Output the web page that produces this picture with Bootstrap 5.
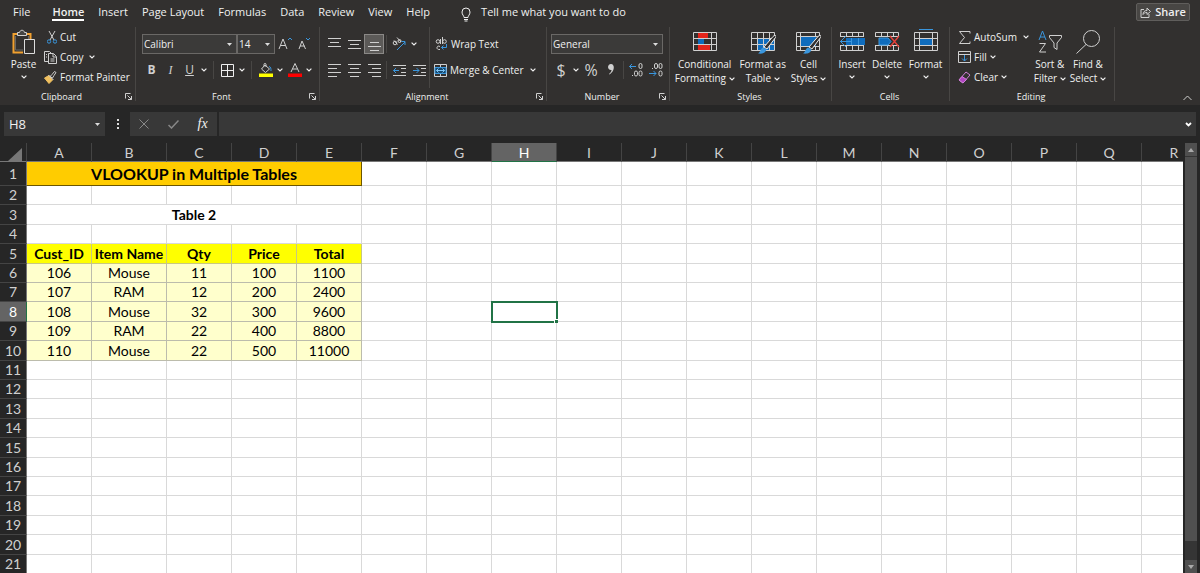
<!DOCTYPE html>
<html lang="en">
<head>
<meta charset="utf-8">
<meta name="viewport" content="width=device-width, initial-scale=1">
<title>Workbook</title>
<link href="https://cdn.jsdelivr.net/npm/bootstrap@5.3.0/dist/css/bootstrap.min.css" rel="stylesheet">
<style>
:root{--ribbon:#32302f;--dark:#262626;--field:#383838;--ink:#f0f0f0;--blue:#3a96dd}
body{background:var(--dark);color:var(--ink);font:11px/14px "Open Sans","Noto Sans",sans-serif}
button,select,input{font:inherit;color:inherit}
button{background:none;border:0;padding:0}
svg{display:block;fill:none;stroke:#d0d0d0;flex:none}
.app{height:100vh;overflow:hidden}
.ribbon{background:var(--ribbon)}
.tabs{height:27px;padding:3px 10px 0 13px}
.tabs .menu{gap:14px}
.tabs a{color:var(--ink);text-decoration:none;height:18px;line-height:17px;white-space:nowrap}
.tabs a.active{font-weight:600;border-bottom:2px solid #fff}
.share{background:#484644;border:1px solid #605e5c;border-radius:2px;width:54px;height:18px;font-weight:600}
.group{border-right:1px solid #484644;height:74px;flex:none;font-size:10px;line-height:14px;white-space:nowrap}
.gbody{height:61px}
.gname{height:16px;padding-right:2px;font-size:9px;line-height:18px}
.gname .ch{height:16px}
.rows{padding-top:7px;gap:6px}
.line{height:20px;gap:3px}
.ib{height:20px;width:19px;display:flex;align-items:center;justify-content:center;font-size:12px;color:#d0d0d0;flex:none}
.wide .ib{width:20px}
.ib.on{background:#5c5a58;border:1px solid #8a8886}
.ch{width:10px;height:20px;display:flex;align-items:center;justify-content:center;flex:none}
.sp{width:1px;height:18px;margin:0 2px;background:#484644;flex:none}
.pick{appearance:none;height:20px;background:#3b3a39 url("data:image/svg+xml,%3Csvg xmlns='http://www.w3.org/2000/svg' width='5' height='3'%3E%3Cpath d='M0 0h5L2.5 3z' fill='%23ddd'/%3E%3C/svg%3E") no-repeat right 4px center;border:1px solid #6a6866;border-radius:0;padding:0 1px;line-height:16px}
.big{display:flex;flex-direction:column;align-items:center;padding-top:2px;flex:none}
.big svg.pic{margin-bottom:2px}
.big svg.dn{margin-top:4px}
.big .dn.d-inline{margin:0}
.fbar{height:38px;padding:7px 4px}
.fbar>*{background:var(--field);height:24px}
.namebox{width:101px;font-size:13px;padding:0 5px}
.dots{width:25px}
.fx{width:87px;margin-right:2px}
.fbox{border:0;outline:0;width:100%;background:transparent;min-width:0}
.sheet{font-family:Lato,"Open Sans",sans-serif;font-size:14px;line-height:16px;color:#000}
.grid{table-layout:fixed;width:1207px;border-collapse:separate;border-spacing:0;text-align:center;background:#fff;white-space:nowrap}
.grid th,.grid td{padding:0;border-right:1px solid #d9d9d9;border-bottom:1px solid #d9d9d9}
.grid tr{height:19px}
.grid tr.tall{height:20px}
.grid thead th,.grid tbody th{background:var(--dark);color:#d0d0d0;font-weight:400;border-color:#444}
.grid thead th{border-bottom-color:#777;vertical-align:bottom}
.grid tbody th{border-right-color:#777}
.grid thead th.cur{background:#646464;border-bottom-color:#217346;color:#fff}
.grid tbody th.cur{background:#646464;border-right-color:#217346;color:#fff}
.grid tr.first{height:24px}
.grid td.title{background:#fc0;font-size:16px;font-weight:700;border-color:#6b5600}
.grid td.fields{background:#ff0;font-weight:700;border-color:#c8c880}
.grid td.rec{background:#ffc;border-color:#bcbcac}
.grid td.sel{outline:2px solid #217346;outline-offset:-1px;position:relative}
.grid td.sel::after{content:"";position:absolute;right:-2px;bottom:-2px;width:4px;height:4px;background:#217346;border:1px solid #fff;border-width:1px 0 0 1px}
.vbar{width:17px;padding:0 3px 0 2px;flex:none}
.vbar button{height:13px;background:#505050;display:flex;align-items:center;justify-content:center}
.thumb{background:#505050;margin-top:1px}
.track{background:#353535}
</style>
</head>
<body>
<svg width="0" height="0" class="position-absolute" aria-hidden="true">
<symbol id="dn" viewBox="0 0 6 4"><path d="M.6.6 3 3 5.4.6" stroke="#f0f0f0" stroke-width="1.2"/></symbol>
<symbol id="launch" viewBox="0 0 7 7"><path d="M.5 5.5v-5h5M2.5 2.5l4 4M6.5 3v3.500H3"/></symbol>
</svg>
<div class="app d-flex flex-column">
<header class="ribbon">
  <nav class="tabs d-flex justify-content-between">
    <div class="menu d-flex">
      <a href="#" class="me-2">File</a><a href="#" class="active">Home</a><a href="#">Insert</a><a href="#">Page Layout</a><a href="#">Formulas</a><a href="#">Data</a><a href="#">Review</a><a href="#">View</a><a href="#">Help</a>
      <a href="#" class="d-flex ms-3"><svg class="mt-1 me-2" width="13" height="15" viewBox="1 0 13 15"><path d="M5 10.500C5 8.500 3 8 3 5a4 4 0 0 1 8 0c0 3-2 3.500-2 5.500zM5 12.500h4M5.500 14h3" stroke="#eee"/></svg>Tell me what you want to do</a>
    </div>
    <button class="share d-flex align-items-center justify-content-center gap-1"><svg width="11" height="11" viewBox="0 0 11 11"><path d="M4 2.500H1v8h8V7M3 7.500C3 5 4.500 3.500 7 3.500V1l3.500 3.500L7 7.500V5.500C5 5.500 4 6 3 7.500z"/></svg>Share</button>
  </nav>
  <div class="d-flex position-relative pb-1">
    <section class="group" style="width:136px">
      <div class="gbody d-flex">
        <button class="big" style="width:47px"><svg class="pic" width="24" height="26" viewBox="0 0 24 26"><path d="M6 5H1.500v18.500H11M15 5h3.500v5" stroke="#f0a030" stroke-width="2"/><path d="M3.500 7v14H11M16.500 7v3" stroke="#666"/><path d="M5.500 6.500v-3h2C8 .5 12 .5 12.500 3.500h2v3z" fill="#444"/><path d="M12.500 10.500h10v14h-10z" fill="#32302f" stroke="#ddd"/></svg>Paste<svg class="dn" width="6" height="4"><use href="#dn"/></svg></button>
        <div>
          <button class="line d-flex align-items-center"><svg width="10" height="13" viewBox="0 0 10 13"><path d="M2 0 7 9M8 0 3 9"/><circle cx="2" cy="10.500" r="1.700" stroke="#3a96dd"/><circle cx="8" cy="10.500" r="1.700" stroke="#3a96dd"/></svg>Cut</button>
          <div class="d-flex"><button class="line d-flex align-items-center"><svg style="margin-left:-3px" width="13" height="13" viewBox="0 0 13 13"><path d="M4 10.500H.5V.5h5L7 2M4.500 2.500h5l3 3v7h-8zM9 3v3h3M6.500 8h4M6.500 10h4M2 3.500h1M2 6h1"/></svg>Copy</button><button class="ch ms-1" aria-label="Copy options"><svg width="6" height="4"><use href="#dn"/></svg></button></div>
          <button class="line d-flex align-items-center"><svg style="margin-left:-3px" width="13" height="13" viewBox="0 0 13 13"><path d="M.5 7 5 4.500 8.500 9 5 12.500z" fill="#f0c060" stroke="#f0c060"/><path d="m4.500 4 5 5M6 5.500l2-2 2.500-3 1.500 1L10 4.500 8.500 7z" fill="#32302f"/></svg>Format Painter</button>
        </div>
      </div>
      <div class="gname d-flex"><span class="flex-grow-1 text-center">Clipboard</span><button class="ch" aria-label="Clipboard dialog"><svg width="7" height="7"><use href="#launch"/></svg></button></div>
    </section>
    <section class="group" style="width:184px">
      <div class="gbody rows d-flex flex-column ps-1">
        <div class="d-flex ps-1" style="margin-left:-2px"><select class="pick" style="width:95px" aria-label="Font"><option>Calibri</option></select><select class="pick" style="width:38px" aria-label="Size"><option>14</option></select>
          <button class="ib" aria-label="Larger"><svg width="14" height="14" viewBox="0 0 14 14"><path d="m1 12 4-10 4 10M2.500 8.500h5" /><path d="m10 3 2-2 2 2" stroke="#3a96dd"/></svg></button><button class="ib" aria-label="Smaller"><svg width="14" height="14" viewBox="0 0 14 14"><path d="m2 12 3-8 3.500 8M3 9h4.500"/><path d="m9 1 2 2 2-2" stroke="#3a96dd"/></svg></button></div>
        <div class="d-flex align-items-center ps-1" style="margin-left:-2px">
          <button class="ib fw-bold">B</button><button class="ib fst-italic" style="font-family:'Liberation Serif',serif">I</button><button class="ib text-decoration-underline">U</button><button class="ch" aria-label="Underline options"><svg width="6" height="4"><use href="#dn"/></svg></button><i class="sp mx-1"></i>
          <button class="ib" aria-label="Borders"><svg width="13" height="13" viewBox="0 0 13 13"><path d="M.5.5h12v12H.5zM6.500 0v13M0 6.500h13" stroke="#eee"/></svg></button><button class="ch" aria-label="Border options"><svg width="6" height="4"><use href="#dn"/></svg></button><i class="sp mx-1"></i>
          <button class="ib" aria-label="Fill colour"><svg width="14" height="14" viewBox="0 0 14 14"><path d="m6 2 4.500 4L6.500 9.500 2.500 6zM5 3.500V1.500c0-1.500 2-1.500 2 0V4"/><path d="M10 3.500c2 .5 2 2 2 4.500" stroke="#3a96dd"/><path d="M0 10.500h14v3.500H0z" fill="#ff0" stroke="none"/></svg></button><button class="ch" aria-label="Fill options"><svg width="6" height="4"><use href="#dn"/></svg></button>
          <button class="ib" aria-label="Font colour"><svg width="14" height="14" viewBox="0 0 14 14"><path d="m3 9 4-8.500L11 9M4.500 6h5"/><path d="M0 10.500h14v3.500H0z" fill="red" stroke="none"/></svg></button><button class="ch" aria-label="Colour options"><svg width="6" height="4"><use href="#dn"/></svg></button>
        </div>
      </div>
      <div class="gname d-flex"><span class="flex-grow-1 text-center">Font</span><button class="ch" aria-label="Font dialog"><svg width="7" height="7"><use href="#launch"/></svg></button></div>
    </section>
    <section class="group wide" style="width:227px">
      <div class="d-flex">
      <div class="gbody rows d-flex flex-column ps-1 border-end" style="width:110px;border-color:#484644!important">
        <div class="d-flex align-items-center">
          <button class="ib" aria-label="Top align"><svg width="13" height="13" viewBox="0 0 13 13"><path d="M0 .5h13M2 4.500h9M0 8.500h13"/></svg></button><button class="ib" aria-label="Middle align"><svg width="13" height="13" viewBox="0 0 13 13"><path d="M0 2.500h13M2 6.500h9M0 10.500h13"/></svg></button><button class="ib on" aria-label="Bottom align"><svg width="13" height="13" viewBox="0 0 13 13"><path d="M2 4.500h9M0 8.500h13M2 12.500h9"/></svg></button><i class="sp"></i>
          <button class="ib" aria-label="Orientation"><svg width="14" height="14" viewBox="0 0 14 14"><circle cx="3" cy="6" r="1.800"/><path d="m2 3.500 3.500 4M5 .5l4 4.500"/><circle cx="7.500" cy="4" r="1.500"/><path d="M5 13 13 5M9.500 4.500H13V8" stroke="#3a96dd"/></svg></button><button class="ch" aria-label="Orientation options"><svg width="6" height="4"><use href="#dn"/></svg></button>
        </div>
        <div class="d-flex align-items-center">
          <button class="ib" aria-label="Left"><svg width="13" height="13" viewBox="0 0 13 13"><path d="M0 .5h13M0 4.500h9M0 8.500h13M0 12.500h9"/></svg></button><button class="ib" aria-label="Centre"><svg width="13" height="13" viewBox="0 0 13 13"><path d="M0 .5h13M2 4.500h9M0 8.500h13M2 12.500h9"/></svg></button><button class="ib" aria-label="Right"><svg width="13" height="13" viewBox="0 0 13 13"><path d="M0 .5h13M4 4.500h9M0 8.500h13M4 12.500h9"/></svg></button><i class="sp"></i>
          <button class="ib" aria-label="Decrease indent"><svg width="13" height="13" viewBox="0 0 13 13"><path d="M0 1.500h13M8 4.500h5M8 8.500h5M0 11.500h13"/><path d="M6 6.500H.5M3 4 .5 6.500 3 9" stroke="#3a96dd"/></svg></button><button class="ib" aria-label="Increase indent"><svg width="13" height="13" viewBox="0 0 13 13"><path d="M0 1.500h13M8 4.500h5M8 8.500h5M0 11.500h13"/><path d="M0 6.500h6M3.500 4 6 6.500 3.500 9" stroke="#3a96dd"/></svg></button>
        </div>
      </div>
      <div class="rows d-flex flex-column ps-1">
        <button class="line d-flex align-items-center"><svg width="14" height="14" viewBox="0 0 14 14"><circle cx="4" cy="4.500" r="1.800"/><path d="M6.500 2v5M8.500 0v7M6 9.500c-3-2-5 3.500 0 3"/><circle cx="10.500" cy="4.500" r="1.800"/><path d="M12.500 7v3.500H7.500M9.500 8.500l-2 2 2 2" stroke="#3a96dd"/></svg>Wrap Text</button>
        <div class="d-flex"><button class="line d-flex align-items-center"><svg width="13" height="13" viewBox="0 0 13 13"><path d="M.5.5h12v12H.5zM6.500 0v3M6.500 10v3M0 3.500h13M0 9.500h13"/><path d="M1 3.500h11v6H1z" fill="#17496f" stroke="#3a96dd"/><path d="M2.500 6.500h8M4.500 4.500l-2 2 2 2M8.500 4.500l2 2-2 2" stroke="#7cc4f5"/></svg>Merge &amp; Center</button><button class="ch ms-1" aria-label="Merge options"><svg width="6" height="4"><use href="#dn"/></svg></button></div>
      </div>
      </div>
      <div class="gname d-flex"><span class="flex-grow-1 text-center">Alignment</span><button class="ch" aria-label="Alignment dialog"><svg width="7" height="7"><use href="#launch"/></svg></button></div>
    </section>
    <section class="group wide" style="width:123px">
      <div class="gbody rows d-flex flex-column ps-1">
        <select class="pick" style="width:112px" aria-label="Number format"><option>General</option></select>
        <div class="d-flex align-items-center">
          <button class="ib fs-6">$</button><button class="ch" aria-label="Currency options"><svg width="6" height="4"><use href="#dn"/></svg></button><button class="ib fs-6">%</button><button class="ib" aria-label="Comma style"><svg width="8" height="12" viewBox="0 0 8 12"><path d="M4 0c4 0 4 7-1.500 10.500L2 10c2-2 2.500-3 2.500-4C0 6.500 0 0 4 0z" fill="#d0d0d0" stroke="none"/></svg></button><i class="sp"></i>
          <button class="ib" aria-label="Increase decimal"><svg width="14" height="14" viewBox="0 0 14 14"><path d="M7 3.500H.5M3 1 .5 3.500 3 6" stroke="#3a96dd"/><rect x="10" y=".5" width="3" height="5" rx="1.500"/><rect x="5.500" y="8" width="3" height="5" rx="1.500"/><rect x="10" y="8" width="3" height="5" rx="1.500"/><path d="M3 12.500h1"/></svg></button><button class="ib" aria-label="Decrease decimal"><svg width="14" height="14" viewBox="0 0 14 14"><path d="M0 10.500h7M4.500 8 7 10.500 4.500 13" stroke="#3a96dd"/><rect x="5.500" y=".5" width="3" height="5" rx="1.500"/><rect x="10" y=".5" width="3" height="5" rx="1.500"/><rect x="10" y="8" width="3" height="5" rx="1.500"/><path d="M3 5.500h1"/></svg></button>
        </div>
      </div>
      <div class="gname d-flex"><span class="flex-grow-1 text-center">Number</span><button class="ch" aria-label="Number dialog"><svg width="7" height="7"><use href="#launch"/></svg></button></div>
    </section>
    <section class="group" style="width:162px">
      <div class="gbody d-flex justify-content-evenly">
        <button class="big"><svg class="pic" width="26" height="26" viewBox="0 0 26 26"><path d="M1.500 3.500h23v18h-23zM1 9.500h24M1 15.500h24M6.500 3v19M19.500 3v19"/><path d="M6 4h10v5H6zM6 16h12v5H6z" fill="#e3241b" stroke="none"/><path d="M6 10h6v5H6z" fill="#0f6cbd" stroke="none"/></svg>Conditional<span>Formatting <svg class="dn d-inline" width="6" height="4"><use href="#dn"/></svg></span></button>
        <button class="big"><svg class="pic" width="26" height="26" viewBox="0 0 26 26"><path d="M8 9h17v12H8z" fill="#0f6cbd" stroke="none"/><path d="M1.500 3.500h23v18h-23zM1 9.500h24M1 15.500h24M7.500 3v19M13.500 3v19M19.500 3v19"/><path d="m14 18 9-10.500c2-2 4-1 2.500 1L17 20z" fill="#32302f" stroke="#eee"/><path d="M16.500 20.500c-1 4-5 4.500-8.500 4 3-1.500 2-5.500 5.500-6z" fill="#3a96dd" stroke="none"/></svg>Format as<span>Table <svg class="dn d-inline" width="6" height="4"><use href="#dn"/></svg></span></button>
        <button class="big"><svg class="pic" width="26" height="26" viewBox="0 0 26 26"><path d="M1.500 3.500h23v18h-23zM1 7.500h24M1 17.500h24M5.500 3v19M20.500 3v19"/><path d="M6 8h15v9H6z" fill="#0f6cbd" stroke="none"/><path d="m14 18 9-10.500c2-2 4-1 2.500 1L17 20z" fill="#32302f" stroke="#eee"/><path d="M16.500 20.500c-1 4-5 4.500-8.500 4 3-1.500 2-5.500 5.500-6z" fill="#3a96dd" stroke="none"/></svg>Cell<span>Styles <svg class="dn d-inline" width="6" height="4"><use href="#dn"/></svg></span></button>
      </div>
      <div class="gname text-center">Styles</div>
    </section>
    <section class="group" style="width:118px">
      <div class="gbody d-flex justify-content-evenly">
        <button class="big"><svg class="pic" width="26" height="26" viewBox="0 0 26 26"><path d="M1.500 8V3.500h23V8M1.500 17v4.500h23V17M7.500 3v5M13.500 3v5M19.500 3v5M7.500 17v5M13.500 17v5M19.500 17v5M1 7.500h24M1 16.500h24"/><path d="M7 9h19v7H7z" fill="#0f6cbd" stroke="none"/><path d="M12.500 9v7M19.500 9v7M13 12.500H1M7 7l-5.500 5.500L7 18" stroke="#3a96dd"/></svg>Insert<svg class="dn" width="6" height="4"><use href="#dn"/></svg></button>
        <button class="big"><svg class="pic" width="26" height="26" viewBox="0 0 26 26"><path d="M1.500 8V3.500h23V8M1.500 17v4.500h23V17M7.500 3v5M13.500 3v5M19.500 3v5M7.500 17v5M13.500 17v5M19.500 17v5M1 7.500h24M1 16.500h24"/><path d="M5 9h9l3 3.500-3 3.500H5z" fill="#0f6cbd" stroke="#3a96dd"/><path d="m16 7 9 11M25 7l-9 11" stroke="#e8403a" stroke-width="1.300"/></svg>Delete<svg class="dn" width="6" height="4"><use href="#dn"/></svg></button>
        <button class="big"><svg class="pic" width="26" height="26" viewBox="0 0 26 26"><path d="M1.500 3.500h23v18h-23zM1 9.500h24M1 16.500h24M6.500 3v19M19.500 3v19"/><path d="M7 10h12v6H7z" fill="#0f6cbd" stroke="none"/><path d="M6 .5h14" stroke="#3a96dd"/></svg>Format<svg class="dn" width="6" height="4"><use href="#dn"/></svg></button>
      </div>
      <div class="gname text-center">Cells</div>
    </section>
    <section class="group" style="width:165px">
      <div class="gbody d-flex">
        <div class="ps-2">
          <div class="d-flex"><button class="line d-flex align-items-center"><svg width="13" height="13" viewBox="0 0 13 13"><path d="M12 2.500V.5H1.500l5 6-5 6H12v-2" /></svg>AutoSum</button><button class="ch ms-1" aria-label="AutoSum options"><svg width="6" height="4"><use href="#dn"/></svg></button></div>
          <button class="line d-flex align-items-center"><svg width="13" height="13" viewBox="0 0 13 13"><path d="M.5.5h12v11H.5zM0 3.500h13"/><path d="M6.500 4v6M4 7.500l2.500 2.500L9 7.500" stroke="#3a96dd"/></svg>Fill <svg width="6" height="4"><use href="#dn"/></svg></button>
          <button class="line d-flex align-items-center"><svg width="13" height="13" viewBox="0 0 13 13"><path d="m8 1 4 3-7 8-4-3z" stroke="#d080d8"/><path d="m4 5.500 4.500 3L5 12 1 9z" fill="#b146c2" stroke="#d080d8"/></svg>Clear <svg width="6" height="4"><use href="#dn"/></svg></button>
        </div>
        <button class="big ms-auto me-1"><svg class="pic" width="26" height="26" viewBox="0 0 26 26"><path d="m2 11 3.500-9L9 11M3 8h5" stroke="#3a96dd"/><path d="M2.500 14.500h6L2.500 23h6.500M12.500 6.500h12v2L20 14v6.500l-3-2V14l-4.500-5.500z"/></svg>Sort &amp;<span>Filter <svg class="dn d-inline" width="6" height="4"><use href="#dn"/></svg></span></button>
        <button class="big me-2"><svg class="pic" width="26" height="26" viewBox="0 0 26 26"><circle cx="16.500" cy="9.500" r="8"/><path d="M11 15.500 1.500 24.500"/></svg>Find &amp;<span>Select <svg class="dn d-inline" width="6" height="4"><use href="#dn"/></svg></span></button>
      </div>
      <div class="gname text-center">Editing</div>
    </section>
    <button class="ms-auto align-self-end pe-2" aria-label="Collapse ribbon"><svg width="9" height="6" viewBox="0 0 9 6"><path d="m.5 5 4-4 4 4"/></svg></button>
  </div>
</header>
<div class="fbar d-flex">
  <button class="namebox d-flex align-items-center justify-content-between">H8<svg width="5" height="3" viewBox="0 0 5 3"><path d="M0 0h5L2.500 3z" fill="#ddd" stroke="none"/></svg></button>
  <div class="dots d-flex align-items-center justify-content-center bg-transparent"><svg width="2" height="10" viewBox="0 0 2 10"><path d="M0 0h2v2H0zM0 4h2v2H0zM0 8h2v2H0z" fill="#ddd" stroke="none"/></svg></div>
  <div class="fx d-flex align-items-center justify-content-around">
    <button aria-label="Cancel"><svg width="10" height="10" viewBox="0 0 10 10"><path d="m.5.5 9 9M9.500.5l-9 9" stroke="#888"/></svg></button><button aria-label="Enter"><svg width="11" height="9" viewBox="0 0 11 9"><path d="m.5 5 3 3 7-7.500" stroke="#888" stroke-width="1.500"/></svg></button><button style="font:italic 14px 'Liberation Serif',serif" aria-label="Insert function">fx</button>
  </div>
  <label class="flex-grow-1 d-flex align-items-center pe-1"><input class="fbox" aria-label="Formula"><svg width="7" height="5" viewBox="0 0 7 5"><path d="m1 1 2.500 2.500L6 1" stroke="#fff" stroke-width="1.800"/></svg></label>
</div>
<main class="sheet d-flex flex-grow-1 overflow-hidden">
  <div class="flex-grow-1 overflow-hidden"><table class="grid" id="grid"></table></div>
  <div class="vbar d-flex flex-column">
    <button aria-label="Scroll up"><svg width="6" height="4" viewBox="0 0 6 4"><path d="M0 4h6L3 0z" fill="#aaa" stroke="none"/></svg></button>
    <div class="track flex-grow-1 d-flex flex-column"><div class="thumb" style="height:95%"></div></div>
    <button aria-label="Scroll down"><svg width="6" height="4" viewBox="0 0 6 4"><path d="M0 0h6L3 4z" fill="#aaa" stroke="none"/></svg></button>
  </div>
</main>
</div>
<script>
const cols = "ABCDEFGHIJKLMNOPQR".split("");
const data = {
  5: ["Cust_ID", "Item Name", "Qty", "Price", "Total"],
  6: [106, "Mouse", 11, 100, 1100],
  7: [107, "RAM", 12, 200, 2400],
  8: [108, "Mouse", 32, 300, 9600],
  9: [109, "RAM", 22, 400, 8800],
  10: [110, "Mouse", 22, 500, 11000]
};
let html = '<colgroup><col style="width:27px">' + cols.map(c => `<col style="width:${c === "B" ? 75 : 65}px">`).join("") + "</colgroup>";
html += '<thead><tr><th><svg class="ms-auto me-1" width="14" height="13" viewBox="0 0 14 13"><path d="M14 0v13H0z" fill="#777" stroke="none"/></svg></th>' + cols.map(c => `<th${c === "H" ? ' class="cur"' : ""}>${c}</th>`).join("") + "</tr></thead><tbody>";
for (let r = 1; r <= 21; r++) {
  html += `<tr class="${r === 1 ? "first" : [0, 3].includes(r % 5) ? "tall" : ""}"><th${r === 8 ? ' class="cur"' : ""}>${r}</th>`;
  cols.forEach((c, i) => {
    if (r === 1 && i < 5) html += i ? "" : '<td class="title" colspan="5">VLOOKUP in Multiple Tables</td>';
    else if (r === 3 && i < 5) html += i ? "" : '<td colspan="5" class="fw-bold">Table 2</td>';
    else if (data[r] && i < 5) html += `<td class="${r === 5 ? "fields" : "rec"}">${data[r][i]}</td>`;
    else html += `<td${r === 8 && c === "H" ? ' class="sel"' : ""}></td>`;
  });
  html += "</tr>";
}
document.getElementById("grid").innerHTML = html + "</tbody>";
</script>
<script src="https://cdn.jsdelivr.net/npm/bootstrap@5.3.0/dist/js/bootstrap.bundle.min.js"></script>
</body>
</html>
